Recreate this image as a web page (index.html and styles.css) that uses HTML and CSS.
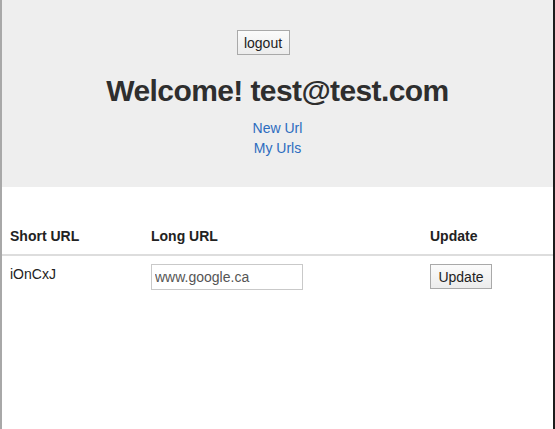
FILE: index.html
```html
<!DOCTYPE html>
<html>
<head>
<meta charset="utf-8">
<link rel="stylesheet" href="styles.css">
</head>
<body>
<div class="frame">
  <header class="hero">
    <button class="btn btn-logout">logout</button>
    <h1 class="title">Welcome! test@test.com</h1>
    <nav class="links">
      <a href="#">New Url</a>
      <a href="#">My Urls</a>
    </nav>
  </header>
  <table class="urls">
    <thead>
      <tr>
        <th class="c1">Short URL</th>
        <th class="c2">Long URL</th>
        <th class="c3">Update</th>
      </tr>
    </thead>
    <tbody>
      <tr>
        <td>iOnCxJ</td>
        <td><input class="long" type="text" value="www.google.ca"></td>
        <td><button class="btn btn-update">Update</button></td>
      </tr>
    </tbody>
  </table>
</div>
</body>
</html>
```
FILE: styles.css
```css
html, body {
  margin: 0;
  padding: 0;
  background: #fff;
}
body {
  font-family: "Liberation Sans", Arial, sans-serif;
  font-size: 14px;
  line-height: 20px;
  color: #333;
}
.frame {
  box-sizing: border-box;
  min-height: 100vh;
  border-left: 2px solid #a8a8a8;
  border-right: 2px solid #1c1c1c;
}
.hero {
  background: #eeeeee;
  height: 187px;
  box-sizing: border-box;
  padding-top: 30px;
  text-align: center;
}
.btn {
  font-family: "Liberation Sans", Arial, sans-serif;
  font-size: 14px;
  color: #222;
  background: linear-gradient(#fbfbfb, #ececec);
  border: 1px solid #a9a9a9;
  border-radius: 0;
  padding: 0;
  margin: 0;
  box-sizing: border-box;
}
.btn-logout {
  width: 53px;
  height: 25px;
  margin-right: 29px;
}
.title {
  margin: 18px 0 0;
  font-size: 30px;
  line-height: 36px;
  font-weight: bold;
  letter-spacing: -0.6px;
  color: #2e2e2e;
}
.links {
  display: flex;
  flex-direction: column;
  align-items: center;
  margin-top: 9px;
}
.links a {
  color: #2c6cbf;
  text-decoration: none;
  line-height: 20px;
}
.urls {
  width: 100%;
  border-collapse: collapse;
  margin-top: 31px;
}
.urls th, .urls td {
  padding: 8px;
  text-align: left;
  vertical-align: top;
}
.urls th {
  font-weight: bold;
  color: #222;
  border-bottom: 2px solid #dddddd;
}
.urls td {
  color: #222;
}
.c1 { width: 125px; }
.c2 { width: 263px; }
.long {
  box-sizing: border-box;
  width: 152px;
  height: 26px;
  margin: 0;
  padding: 0 3px;
  border: 1px solid #c9c9c9;
  font-family: "Liberation Sans", Arial, sans-serif;
  font-size: 14px;
  color: #555;
  background: #fff;
}
.btn-update {
  width: 62px;
  height: 25px;
}
```
